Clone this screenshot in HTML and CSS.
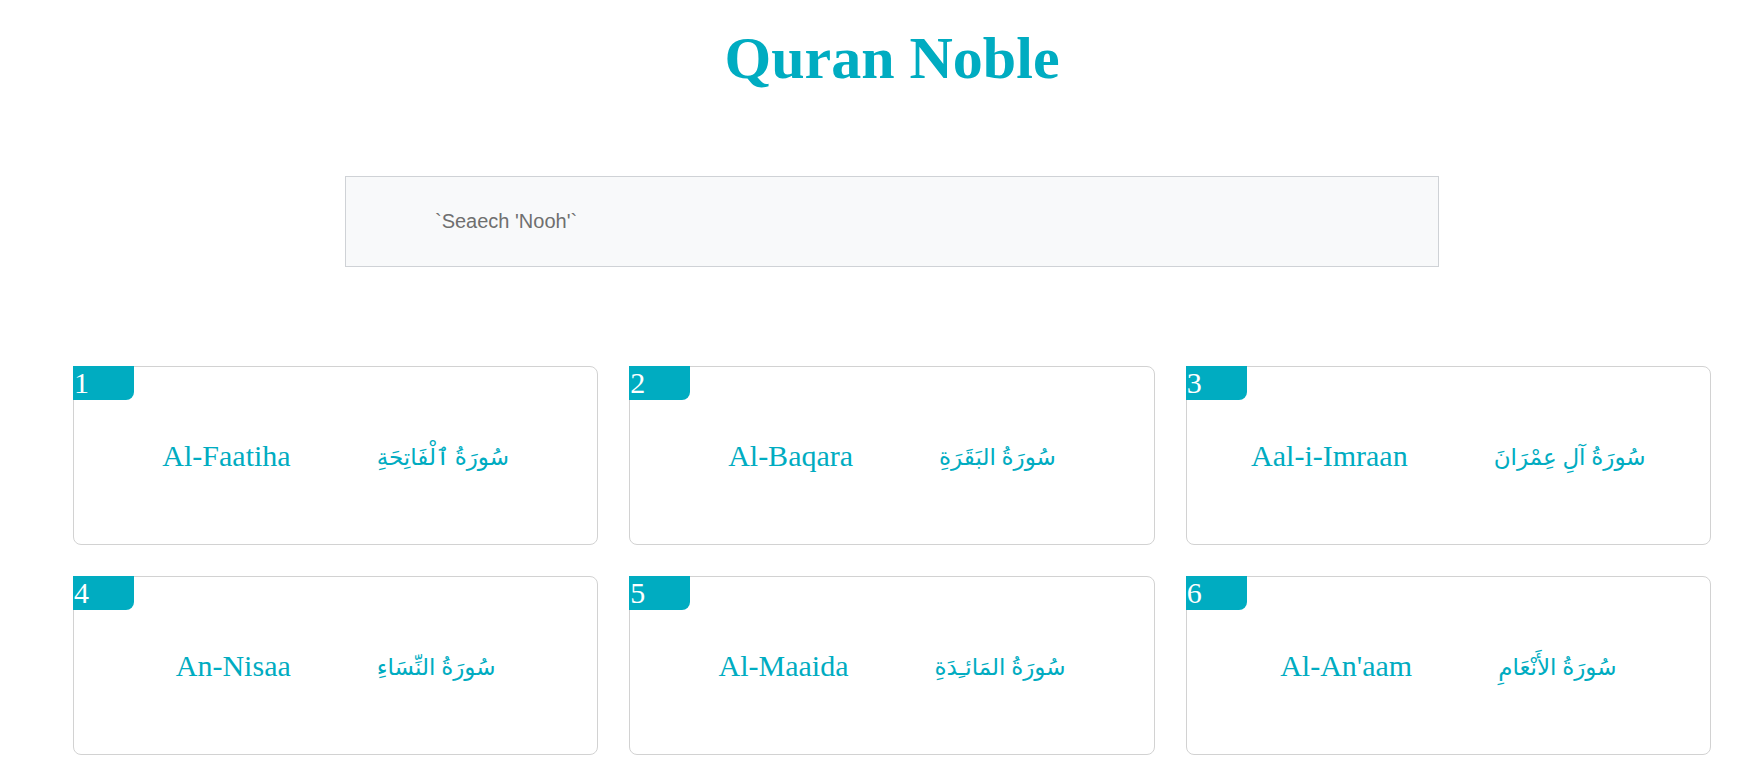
FILE: index.html
```html
<!DOCTYPE html>
<html lang="en">
<head>
<meta charset="utf-8">
<title>Quran Noble</title>
<link rel="stylesheet" href="styles.css">
</head>
<body>
<div class="page">
  <h1 class="title">Quran Noble</h1>
  <div class="search">
    <input class="search-input" type="text" placeholder="`Seaech 'Nooh'`">
  </div>
  <div class="grid">
    <div class="card">
      <span class="badge">1</span>
      <span class="en">Al-Faatiha</span>
      <span class="ar" dir="rtl" lang="ar">سُورَةُ ٱلْفَاتِحَةِ</span>
    </div>
    <div class="card">
      <span class="badge">2</span>
      <span class="en">Al-Baqara</span>
      <span class="ar" dir="rtl" lang="ar">سُورَةُ البَقَرَةِ</span>
    </div>
    <div class="card">
      <span class="badge">3</span>
      <span class="en">Aal-i-Imraan</span>
      <span class="ar" dir="rtl" lang="ar">سُورَةُ آلِ عِمْرَانَ</span>
    </div>
    <div class="card">
      <span class="badge">4</span>
      <span class="en">An-Nisaa</span>
      <span class="ar" dir="rtl" lang="ar">سُورَةُ النِّسَاءِ</span>
    </div>
    <div class="card">
      <span class="badge">5</span>
      <span class="en">Al-Maaida</span>
      <span class="ar" dir="rtl" lang="ar">سُورَةُ المَائـِدَةِ</span>
    </div>
    <div class="card">
      <span class="badge">6</span>
      <span class="en">Al-An'aam</span>
      <span class="ar" dir="rtl" lang="ar">سُورَةُ الأَنْعَامِ</span>
    </div>
  </div>
</div>
</body>
</html>
```
FILE: styles.css
```css
html, body {
  margin: 0;
  padding: 0;
  background: #ffffff;
}

body {
  font-family: "Liberation Serif", "DejaVu Sans", serif;
}

.page {
  padding: 24px 42px 0 73px;
}

.title {
  margin: 0;
  text-align: center;
  font-size: 60px;
  font-weight: bold;
  color: #00acc1;
  line-height: normal;
}

.search {
  margin-top: 83px;
  padding: 0 272px;
}

.search-input {
  display: block;
  width: 100%;
  height: 91px;
  box-sizing: border-box;
  border: 1px solid #cfd2d6;
  background: #f8f9fa;
  padding: 0 0 0 89px;
  font-family: "Liberation Sans", Arial, sans-serif;
  font-size: 20px;
  color: #333;
  outline: none;
}

.search-input::placeholder {
  color: #6f6f6f;
}

.grid {
  margin-top: 99px;
  display: grid;
  grid-template-columns: repeat(3, 1fr);
  column-gap: 31px;
  row-gap: 31px;
}

.card {
  position: relative;
  height: 179px;
  box-sizing: border-box;
  border: 1px solid #d2d2d2;
  border-radius: 8px;
  display: flex;
  justify-content: center;
  align-items: center;
  gap: 86px;
  color: #00acc1;
  font-size: 30px;
}

.badge {
  position: absolute;
  top: -1px;
  left: -1px;
  width: 60px;
  height: 34px;
  padding-left: 1px;
  background: #00acc1;
  color: #ffffff;
  font-size: 30px;
  line-height: 34px;
  border-bottom-right-radius: 8px;
}

.ar {
  font-size: 23px;
  padding-top: 3px;
}
```
